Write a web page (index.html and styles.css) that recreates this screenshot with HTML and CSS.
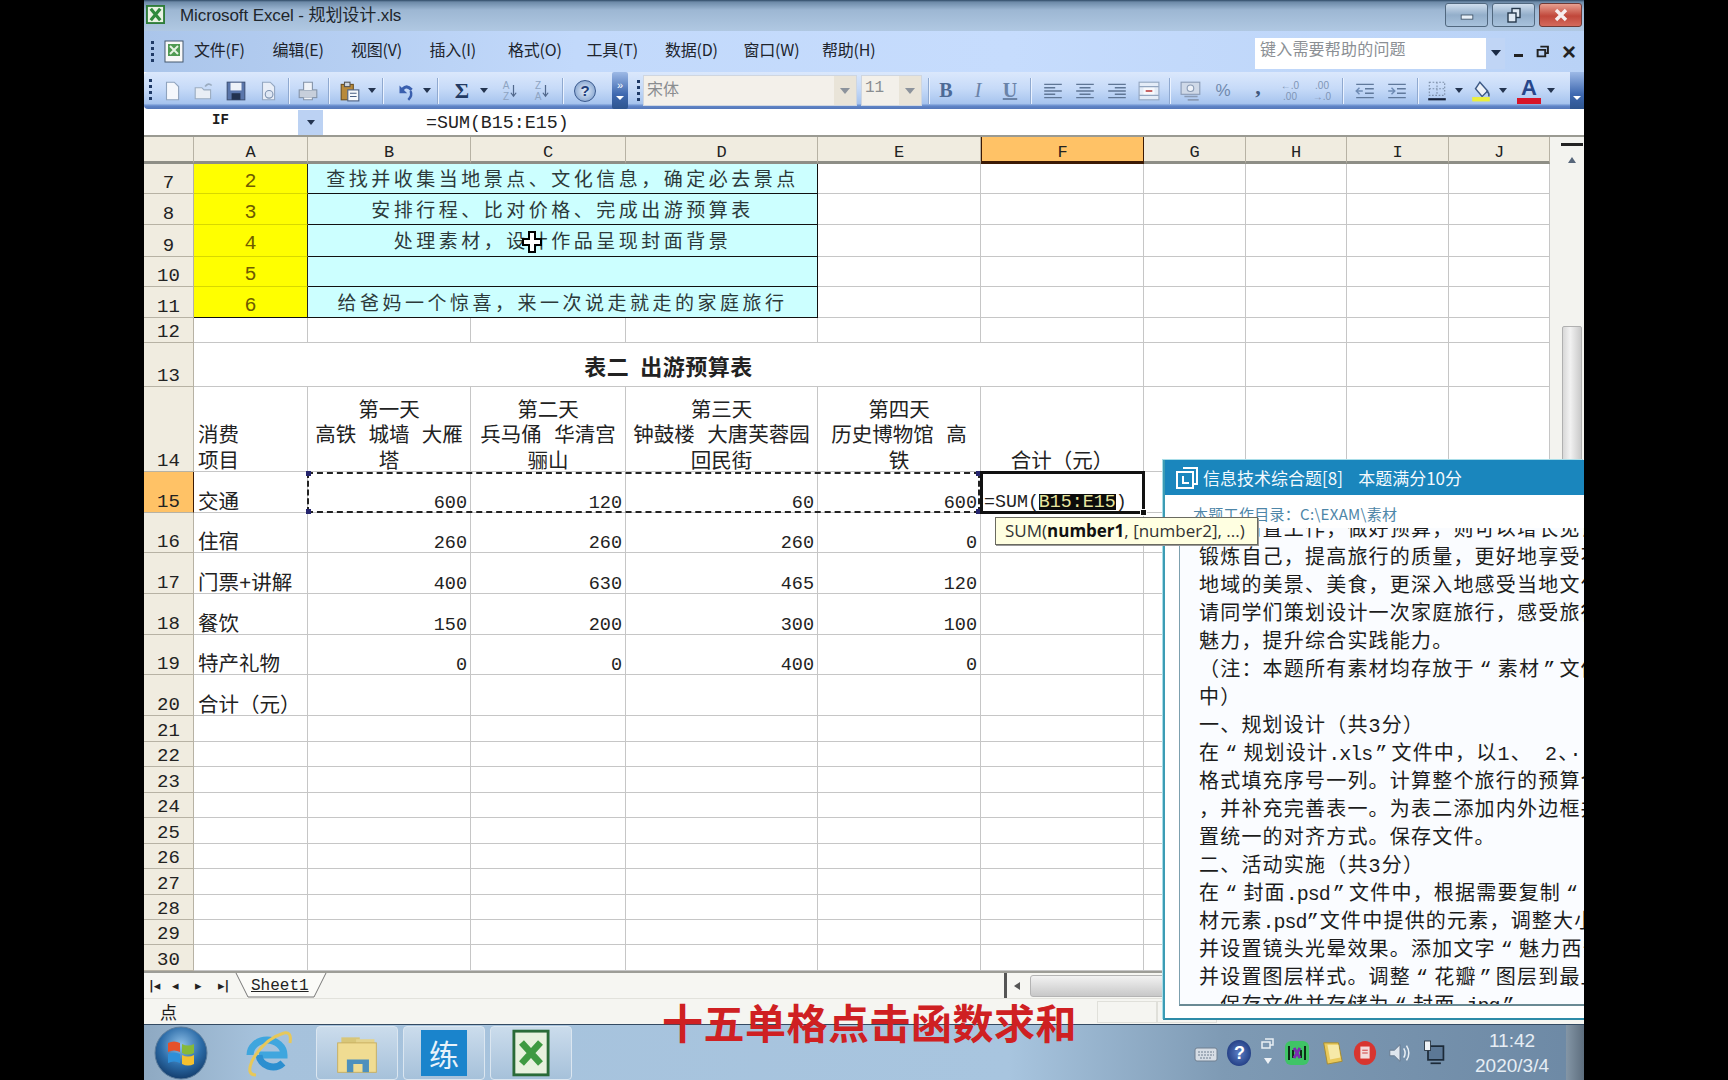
FILE: index.html
```html
<!DOCTYPE html>
<html lang="zh-CN">
<head>
<meta charset="utf-8">
<title>Microsoft Excel - 规划设计.xls</title>
<link rel="stylesheet" href="styles.css">
</head>
<body>
<div class="app">

  <header class="titlebar">
    <svg class="xl-small" viewBox="0 0 20 20"><rect x="1" y="1" width="18" height="18" fill="#eaf3e4" stroke="#2f7d3a" stroke-width="2"/><path d="M5 4l10 12M15 4L5 16" stroke="#2f8a3c" stroke-width="3.4"/></svg>
    <span class="title-text">Microsoft Excel - 规划设计.xls</span>
    <div class="winbtns">
      <button class="wb"><svg viewBox="0 0 20 12" width="18" height="10"><rect x="3" y="6" width="14" height="5" fill="#e8f0f8" stroke="#3d4f63"/></svg></button>
      <button class="wb"><svg viewBox="0 0 16 16" width="16" height="16"><rect x="6" y="1.5" width="8" height="9" fill="#dfe9f3" stroke="#26384b" stroke-width="1.4"/><rect x="2" y="6" width="8" height="9" fill="#dfe9f3" stroke="#26384b" stroke-width="1.4"/></svg></button>
      <button class="wb close"><svg viewBox="0 0 16 14" width="18" height="14"><path d="M3 2l10 10M13 2L3 12" stroke="#f6eeee" stroke-width="3.4"/></svg></button>
    </div>
  </header>

  <nav class="menubar">
    <i class="grip"></i>
    <svg class="menu-ico" viewBox="0 0 22 24"><rect x="2" y="1" width="18" height="21" fill="#f8f8f8" stroke="#44586f"/><rect x="5" y="4" width="12" height="12" fill="#4f9a52"/><path d="M7 6l8 8M15 6l-8 8" stroke="#e6f3e2" stroke-width="2"/></svg>
    <ul class="menus">
      <li>文件(F)</li><li>编辑(E)</li><li>视图(V)</li><li>插入(I)</li><li>格式(O)</li><li>工具(T)</li><li>数据(D)</li><li>窗口(W)</li><li>帮助(H)</li>
    </ul>
    <div class="helpbox"><span>键入需要帮助的问题</span><b class="helpdrop"><i class="tri"></i></b></div>
    <div class="mdi"><i class="mdi-min"></i><svg viewBox="0 0 12 12" width="13" height="13"><path d="M4 1.5h7v6H9M1.5 4.5h7v6h-7z" fill="none" stroke="#222" stroke-width="1.8"/></svg><span class="mdi-x">×</span></div>
  </nav>

  <div class="toolbar">
    <i class="grip tgrip"></i>
    <span class="t"><svg class="i" viewBox="0 0 20 20"><path d="M5 2h7l4 4v12H5z" fill="#f4f7fc" stroke="#8fa3bd"/></svg></span>
    <span class="t"><svg class="i" viewBox="0 0 20 20"><path d="M2 7h6l2 2h6v8H2z" fill="#e9eef5" stroke="#9bacc0"/><path d="M11 6q3-4 6-1" fill="none" stroke="#9bacc0" stroke-width="1.5"/></svg></span>
    <span class="t"><svg class="i" viewBox="0 0 20 20"><rect x="2" y="2" width="16" height="16" fill="#5a76ab" stroke="#3e5278"/><rect x="5" y="2.500" width="10" height="7" fill="#eef2f8"/><rect x="6" y="12" width="8" height="6" fill="#22324f"/></svg></span>
    <span class="t"><svg class="i" viewBox="0 0 20 20"><path d="M5 2h7l4 4v12H5z" fill="#e9eef7" stroke="#93a6c0"/><circle cx="11" cy="13" r="3.500" fill="#dfe8f5" stroke="#7f93b0"/></svg></span>
    <i class="s"></i>
    <span class="t"><svg class="i" viewBox="0 0 20 20"><rect x="2" y="9" width="16" height="7" fill="#c7cfdb" stroke="#8594a9"/><path d="M6 9V2h8v7M6 16v2h8v-2" fill="#f0f3f8" stroke="#8594a9"/></svg></span>
    <i class="s"></i>
    <span class="t nudge2"><svg class="i" viewBox="0 0 20 20"><rect x="2" y="4" width="11" height="14" fill="#b98a3b" stroke="#6d5122"/><rect x="5" y="2" width="5" height="4" fill="#cfd6df" stroke="#555"/><rect x="8" y="9" width="10" height="10" fill="#f7f9fc" stroke="#4a5f83"/><path d="M10 12h6M10 15h6" stroke="#4a5f83"/></svg></span>
    <i class="a"><i class="tri dark"></i></i>
    <i class="s"></i>
    <span class="t nudge3"><svg class="i" viewBox="0 0 20 20"><path d="M5 5v7h7l-3-3q3-3 6 1l2-2q-5-6-10-1z" fill="#3a5fae"/><path d="M15 10q2 4-2 8" fill="none" stroke="#3a5fae" stroke-width="2.2"/></svg></span>
    <i class="a"><i class="tri dark"></i></i>
    <i class="s"></i>
    <span class="t sigma">Σ</span>
    <i class="a"><i class="tri dark"></i></i>
    <span class="t sortlbl nudge5"><span class="az">A<br>Z</span><svg viewBox="0 0 8 20" width="7" height="20"><path d="M4 3v12M1 12l3 4 3-4" fill="none" stroke="#51688c" stroke-width="1.4"/></svg></span>
    <span class="t sortlbl"><span class="az">Z<br>A</span><svg viewBox="0 0 8 20" width="7" height="20"><path d="M4 3v12M1 12l3 4 3-4" fill="none" stroke="#51688c" stroke-width="1.4"/></svg></span>
    <i class="s"></i>
    <span class="t helpt"><span class="helpc">?</span></span>
    <span class="over"><i class="chev">»</i><i class="tri white"></i></span>
    <i class="grip tgrip2"></i>
    <span class="combo font"><span>宋体</span><b><i class="tri gray"></i></b></span>
    <span class="combo size"><span>11</span><b><i class="tri gray"></i></b></span>
    <i class="s first"></i>
    <span class="t fmt bold">B</span>
    <span class="t fmt ital">I</span>
    <span class="t fmt und">U</span>
    <i class="s"></i>
    <span class="t nudge3"><svg class="i" viewBox="0 0 20 20"><path d="M2 4h16M2 7h10M2 10h16M2 13h10M2 16h16" stroke="#5f7695" stroke-width="1.300"/></svg></span>
    <span class="t"><svg class="i" viewBox="0 0 20 20"><path d="M2 4h16M5 7h10M2 10h16M5 13h10M2 16h16" stroke="#5f7695" stroke-width="1.300"/></svg></span>
    <span class="t"><svg class="i" viewBox="0 0 20 20"><path d="M2 4h16M8 7h10M2 10h16M8 13h10M2 16h16" stroke="#5f7695" stroke-width="1.300"/></svg></span>
    <span class="t"><svg class="i" viewBox="0 0 20 20"><rect x="1" y="2" width="18" height="16" fill="#e4ecf7" stroke="#93a6c0"/><path d="M1 6h18M1 14h18" stroke="#93a6c0"/><rect x="5" y="7" width="10" height="6" fill="#f7f9fc"/><path d="M7 10h6" stroke="#b44" stroke-width="1.500"/></svg></span>
    <i class="s"></i>
    <span class="t nudge2"><svg class="i" viewBox="0 0 20 20"><rect x="1" y="2" width="17" height="11" fill="#cfd9e8" stroke="#8a9bb5"/><circle cx="9.500" cy="7.500" r="3" fill="#eef2f8" stroke="#8a9bb5"/><path d="M4 15h12M7 18h10" stroke="#8a9bb5" stroke-width="1.500"/></svg></span>
    <span class="t fmt pct">%</span>
    <span class="t fmt comma">,</span>
    <span class="t fmt dec"><span>←.0<br>.00</span></span>
    <span class="t fmt dec"><span>.00<br>→.0</span></span>
    <i class="s"></i>
    <span class="t nudge3"><svg class="i" viewBox="0 0 20 20"><path d="M2 4h16M10 8h8M10 12h8M2 16h16" stroke="#60799b" stroke-width="1.300"/><path d="M8 10H2m3-3l-3 3 3 3" fill="none" stroke="#6f8cb5" stroke-width="1.300"/></svg></span>
    <span class="t"><svg class="i" viewBox="0 0 20 20"><path d="M2 4h16M10 8h8M10 12h8M2 16h16" stroke="#60799b" stroke-width="1.300"/><path d="M2 10h6M5 7l3 3-3 3" fill="none" stroke="#6f8cb5" stroke-width="1.300"/></svg></span>
    <i class="s"></i>
    <span class="t"><svg class="i" viewBox="0 0 20 20"><path d="M3 2h14v12H3zM3 8h14M10 2v12" fill="none" stroke="#7c8ea8" stroke-dasharray="1.500 1.500"/><path d="M2 17.500h16" stroke="#16223a" stroke-width="2"/></svg></span>
    <i class="a"><i class="tri dark"></i></i>
    <span class="t"><svg class="i" viewBox="0 0 20 20"><path d="M9 2l7 8-5 5-6-7z" fill="#eef2f8" stroke="#3e5a86" stroke-width="1.300"/><path d="M15 10q3 2 2 5" fill="none" stroke="#3e5a86" stroke-width="1.500"/><rect x="2" y="15.500" width="16" height="4" fill="#ecef3c"/></svg></span>
    <i class="a"><i class="tri dark"></i></i>
    <span class="t fcolor nudge5"><span>A</span><i></i></span>
    <i class="a"><i class="tri dark"></i></i>
    <span class="over end"><i class="chev"></i><i class="tri white"></i></span>
  </div>

  <div class="formula">
    <div class="namebox"><span>IF</span><b><i class="tri dark"></i></b></div>
    <div class="ftext">=SUM(B15:E15)</div>
  </div>

  <div class="sheetwrap">
    <div class="sheet">
      <div class="ch corner"></div><div class="ch">A</div><div class="ch">B</div><div class="ch">C</div><div class="ch">D</div><div class="ch">E</div><div class="ch act-col">F</div><div class="ch">G</div><div class="ch">H</div><div class="ch">I</div><div class="ch">J</div>

      <div class="rh">7</div><div class="yl">2</div><div class="cy span3">查找并收集当地景点、文化信息，确定必去景点</div><div></div><div></div><div></div><div></div><div></div><div></div>
      <div class="rh">8</div><div class="yl">3</div><div class="cy span3">安排行程、比对价格、完成出游预算表</div><div></div><div></div><div></div><div></div><div></div><div></div>
      <div class="rh">9</div><div class="yl">4</div><div class="cy span3">处理素材，设计作品呈现封面背景</div><div></div><div></div><div></div><div></div><div></div><div></div>
      <div class="rh">10</div><div class="yl">5</div><div class="cy span3"></div><div></div><div></div><div></div><div></div><div></div><div></div>
      <div class="rh">11</div><div class="yl last">6</div><div class="cy span3 last">给爸妈一个惊喜，来一次说走就走的家庭旅行</div><div></div><div></div><div></div><div></div><div></div><div></div>
      <div class="rh">12</div><div></div><div></div><div></div><div></div><div></div><div></div><div></div><div></div><div></div><div></div>
      <div class="rh">13</div><div class="sheet-title">表二&nbsp;&nbsp;出游预算表</div><div></div><div></div><div></div><div></div>
      <div class="rh">14</div><div class="hd left"><span>消费<br>项目</span></div><div class="hd"><span>第一天<br>高铁 城墙 大雁<br>塔</span></div><div class="hd"><span>第二天<br>兵马俑 华清宫<br>骊山</span></div><div class="hd"><span>第三天<br>钟鼓楼 大唐芙蓉园<br>回民街</span></div><div class="hd"><span>第四天<br>历史博物馆 高<br>铁</span></div><div class="hd"><span>合计（元）</span></div><div></div><div></div><div></div><div></div>
      <div class="rh act-row">15</div><div class="tx">交通</div><div class="num ants-host">600<span class="ants"><i class="dot tl"></i><i class="dot tr"></i><i class="dot bl"></i><i class="dot br"></i></span></div><div class="num">120</div><div class="num">60</div><div class="num">600</div><div class="active"><span>=SUM(</span><mark>B15:E15</mark><span>)</span><i class="handle"></i></div><div></div><div></div><div></div><div></div>
      <div class="rh">16</div><div class="tx">住宿</div><div class="num">260</div><div class="num">260</div><div class="num">260</div><div class="num">0</div><div></div><div></div><div></div><div></div><div></div>
      <div class="rh">17</div><div class="tx">门票+讲解</div><div class="num">400</div><div class="num">630</div><div class="num">465</div><div class="num">120</div><div></div><div></div><div></div><div></div><div></div>
      <div class="rh">18</div><div class="tx">餐饮</div><div class="num">150</div><div class="num">200</div><div class="num">300</div><div class="num">100</div><div></div><div></div><div></div><div></div><div></div>
      <div class="rh">19</div><div class="tx">特产礼物</div><div class="num">0</div><div class="num">0</div><div class="num">400</div><div class="num">0</div><div></div><div></div><div></div><div></div><div></div>
      <div class="rh">20</div><div class="tx">合计（元）</div><div></div><div></div><div></div><div></div><div></div><div></div><div></div><div></div><div></div>
      <div class="rh">21</div><div></div><div></div><div></div><div></div><div></div><div></div><div></div><div></div><div></div><div></div>
      <div class="rh">22</div><div></div><div></div><div></div><div></div><div></div><div></div><div></div><div></div><div></div><div></div>
      <div class="rh">23</div><div></div><div></div><div></div><div></div><div></div><div></div><div></div><div></div><div></div><div></div>
      <div class="rh">24</div><div></div><div></div><div></div><div></div><div></div><div></div><div></div><div></div><div></div><div></div>
      <div class="rh">25</div><div></div><div></div><div></div><div></div><div></div><div></div><div></div><div></div><div></div><div></div>
      <div class="rh">26</div><div></div><div></div><div></div><div></div><div></div><div></div><div></div><div></div><div></div><div></div>
      <div class="rh">27</div><div></div><div></div><div></div><div></div><div></div><div></div><div></div><div></div><div></div><div></div>
      <div class="rh">28</div><div></div><div></div><div></div><div></div><div></div><div></div><div></div><div></div><div></div><div></div>
      <div class="rh">29</div><div></div><div></div><div></div><div></div><div></div><div></div><div></div><div></div><div></div><div></div>
      <div class="rh">30</div><div></div><div></div><div></div><div></div><div></div><div></div><div></div><div></div><div></div><div></div>
    </div>
    <div class="vscroll">
      <i class="split"></i>
      <i class="tri up"></i>
      <i class="thumb"></i>
    </div>
  </div>

  <div class="tabbar">
    <span class="navs"><i>|◂</i><i>◂</i><i>▸</i><i>▸|</i></span>
    <svg class="tab" viewBox="0 0 92 26" width="92" height="26"><path d="M1 0l12 24h66L91 0" fill="#fbfbf8" stroke="#777"/></svg>
    <span class="tabname">Sheet1</span>
    <i class="splitter"></i>
    <i class="tri left"></i>
    <i class="hthumb"></i>
  </div>

  <div class="statusbar"><span>点</span><i class="sbox"></i><i class="sbox"></i></div>

  <footer class="taskbar">
    <svg class="orb" viewBox="0 0 56 56" width="56" height="56">
      <defs><radialGradient id="og" cx="50%" cy="35%" r="65%"><stop offset="0" stop-color="#8fc0e8"/><stop offset=".6" stop-color="#2c6ca8"/><stop offset="1" stop-color="#143e6e"/></radialGradient></defs>
      <circle cx="28" cy="28" r="26" fill="url(#og)" stroke="#5b7c9c"/>
      <path d="M15 18q6-3 12 0v9q-6-3-12 0z" fill="#e5512a"/><path d="M29 19q6 3 12 0v9q-6 3-12 0z" fill="#86b93a"/><path d="M15 29q6-3 12 0v9q-6-3-12 0z" fill="#2e8fd8"/><path d="M29 30q6 3 12 0v9q-6 3-12 0z" fill="#f4c02f"/>
    </svg>
    <svg class="ie" viewBox="0 0 52 56" width="52" height="56">
      <path d="M8 30a17 15 0 1 1 34 0H17" fill="none" stroke="#3fa6de" stroke-width="7"/><path d="M17 30a14 13 0 0 0 24 8" fill="none" stroke="#2c8fd0" stroke-width="7"/><path d="M42 8Q22 14 10 36q-6 14 4 14" fill="none" stroke="#e7c85a" stroke-width="3"/><path d="M42 8q8-2 6 10" fill="none" stroke="#e7c85a" stroke-width="3"/>
    </svg>
    <div class="tbtn"><svg viewBox="0 0 50 50" width="46" height="48"><rect x="8" y="8" width="20" height="8" fill="#d8c678"/><rect x="24" y="10" width="20" height="8" fill="#e4d38c"/><rect x="4" y="14" width="42" height="32" fill="#f0dc92" stroke="#c6ad5f"/><path d="M14 46V32h24v14h-7V37H21v9z" fill="#4d90bd"/></svg></div>
    <div class="tbtn"><span class="lian">练</span></div>
    <div class="tbtn"><svg viewBox="0 0 40 50" width="38" height="48"><rect x="2" y="2" width="36" height="46" fill="#e8f1de" stroke="#2a6b37" stroke-width="3"/><path d="M10 14l20 22M30 14L10 36" stroke="#3f9a42" stroke-width="7"/></svg></div>
    <div class="tray">
      <svg viewBox="0 0 24 20" width="24" height="20"><rect x="1" y="5" width="22" height="13" rx="2" fill="#d6dde5" stroke="#6f7f90"/><path d="M4 9h16M4 12h16M6 15h12" stroke="#6f7f90" stroke-dasharray="2 1"/></svg>
      <span class="qmark">?</span>
      <svg class="uparrow" viewBox="0 0 14 30" width="14" height="30"><path d="M4 1h8v6H9M1 4h8v6H1z" fill="none" stroke="#e8eef4" stroke-width="1.500"/><path d="M3 20h8l-4 6z" fill="#eef2f6"/></svg>
      <svg viewBox="0 0 26 26" width="26" height="26"><rect x="1" y="1" width="24" height="24" rx="6" fill="#3fc466"/><path d="M5 6v14M21 6v14M9 10v8M17 10v8" stroke="#0e2a16" stroke-width="2"/><path d="M10 8l6 10M16 8l-6 10" stroke="#7a2bb0" stroke-width="3"/></svg>
      <svg viewBox="0 0 26 28" width="24" height="28"><path d="M4 3h16l4 20-16 3z" fill="#e9c95b" stroke="#a58a2e"/><path d="M8 5h12l2 14-11 2z" fill="#f6e9a8"/></svg>
      <svg viewBox="0 0 26 28" width="24" height="28"><ellipse cx="13" cy="14" rx="12" ry="13" fill="#d8352f"/><rect x="8" y="7" width="10" height="13" fill="#f2dcdc"/><path d="M10 11h6M10 14h6" stroke="#c33"/></svg>
      <svg viewBox="0 0 28 24" width="26" height="24"><path d="M3 9h5l6-6v18l-6-6H3z" fill="#dfe6ee" stroke="#66788c"/><path d="M18 7q3 5 0 10M21 4q5 8 0 16" fill="none" stroke="#e9eff5" stroke-width="1.600"/></svg>
      <svg viewBox="0 0 28 32" width="24" height="30"><rect x="7" y="8" width="18" height="16" fill="#5c7896" stroke="#1c2a38" stroke-width="2"/><rect x="3" y="2" width="7" height="11" fill="#eef2f6" stroke="#23303d"/><path d="M10 28h12" stroke="#1c2a38" stroke-width="2"/></svg>
    </div>
    <div class="clock"><span>11:42</span><span>2020/3/4</span></div>
    <div class="showdesk"></div>
  </footer>

  <section class="panel">
    <div class="panel-head">
      <svg viewBox="0 0 24 24" width="24" height="24"><path d="M8 2h14v16H8" fill="none" stroke="#fff" stroke-width="2"/><rect x="2" y="6" width="16" height="16" fill="#1b87bd" stroke="#fff" stroke-width="2"/><path d="M8 10v7h6" fill="none" stroke="#fff" stroke-width="2"/></svg>
      <span>信息技术综合题[8]&nbsp;&nbsp;&nbsp;&nbsp;本题满分10分</span>
    </div>
    <div class="panel-dir">本题工作目录：C:\EXAM\素材</div>
    <div class="panel-body">
      <p>旅行前置工作，做好预算，则可以增长见识，</p>
      <p>锻炼自己，提高旅行的质量，更好地享受不同</p>
      <p>地域的美景、美食，更深入地感受当地文化，</p>
      <p>请同学们策划设计一次家庭旅行，感受旅行的</p>
      <p>魅力，提升综合实践能力。</p>
      <p>（注：本题所有素材均存放于<span class="q">“</span>素材<span class="qc">”</span>文件夹</p>
      <p>中）</p>
      <p>一、规划设计（共3分）</p>
      <p>在<span class="q">“</span>规划设计<span class="lat">.xls</span><span class="qc">”</span>文件中，以1、 2、···序列</p>
      <p>格式填充序号一列。计算整个旅行的预算合计</p>
      <p>，并补充完善表一。为表二添加内外边框并设</p>
      <p>置统一的对齐方式。保存文件。</p>
      <p>二、活动实施（共3分）</p>
      <p>在<span class="q">“</span>封面<span class="lat">.psd</span><span class="qc">”</span>文件中，根据需要复制<span class="q">“</span>素</p>
      <p>材元素<span class="lat">.psd</span>”文件中提供的元素，调整大小，</p>
      <p>并设置镜头光晕效果。添加文字<span class="q">“</span>魅力西安<span class="qc">”</span></p>
      <p>并设置图层样式。调整<span class="q">“</span>花瓣<span class="qc">”</span>图层到最上层</p>
      <p>，保存文件并存储为<span class="q">“</span>封面<span class="lat">.jpg</span><span class="qc">”</span></p>
    </div>
  </section>

  <div class="tooltip">SUM(<b>number1</b>, [number2], ...)</div>
  <svg class="cursor" viewBox="0 0 20 22" width="20" height="22"><path d="M7 1h6v7h6v6h-6v7H7v-7H1V8h6z" fill="#fff" stroke="#000" stroke-width="2"/></svg>
  <div class="subtitle">十五单格点击函数求和</div>
</div>
</body>
</html>
```

FILE: styles.css
```css
* { box-sizing: border-box; }
html, body { margin: 0; padding: 0; background: #000; width: 1728px; height: 1080px; overflow: hidden; }
i { font-style: normal; display: block; }
ul { list-style: none; margin: 0; padding: 0; }
p { margin: 0; }
button { border: 0; padding: 0; }

.app {
  position: relative;
  width: 1440px;
  height: 1080px;
  margin-left: 144px;
  overflow: hidden;
  display: flex;
  flex-direction: column;
  background: #fff;
  font-family: "Noto Sans CJK SC", sans-serif;
  color: #1c1c1c;
}

/* title bar */
.titlebar {
  height: 31px;
  flex: none;
  display: flex;
  align-items: center;
  padding-left: 2px;
  background: linear-gradient(#2f4a66 0, #6d8aa8 2px, #9db7d3 10px, #b0c8e2 31px);
}
.xl-small { width: 19px; height: 19px; margin-top: -2px; }
.title-text { margin: -5px 0 0 15px; font-size: 17px; color: #20262c; font-family: "Liberation Sans", "Noto Sans CJK SC", sans-serif; letter-spacing: -.1px; }
.winbtns { margin-left: auto; display: flex; gap: 4px; height: 24px; margin-right: 2px; margin-top: -2px; }
.wb { width: 43px; height: 24px; border-radius: 3px; display: flex; align-items: center; justify-content: center; border: 1px solid #51687f; background: linear-gradient(#cfdeee, #93aeca 50%, #a8c2dc); }
.wb.close { background: linear-gradient(#e8a090, #c0473a 55%, #d46a5c); border-color: #6e3a36; }

/* menu */
.menubar {
  height: 41px;
  flex: none;
  display: flex;
  align-items: center;
  background: linear-gradient(90deg, #aac5ea 0, #c2d9fb 30%, #c6dcfd 60%, #b9d2f6 100%);
}
.grip { width: 3px; height: 22px; background: repeating-linear-gradient(#1f3a66 0 3px, transparent 3px 6px); }
.menubar .grip { margin-left: 7px; }
.menu-ico { width: 22px; height: 24px; margin-left: 9px; }
.menus { display: flex; margin: -5px 0 0 9px; gap: 22.500px; font-size: 16px; color: #20242c; }
.menus li { width: 56px; white-space: nowrap; letter-spacing: -.2px; }
.helpbox { margin-left: auto; width: 250px; height: 31px; background: #fff; display: flex; align-items: center; justify-content: space-between; font-size: 16px; color: #8b8f94; padding-left: 5px; margin-top: 3px; letter-spacing: .2px; }
.helpbox span { margin-top: -11px; }
.helpdrop { width: 19px; height: 31px; background: #c0d5f5; display: flex; align-items: center; justify-content: center; }
.mdi { width: 79px; display: flex; align-items: center; justify-content: space-between; padding: 0 8px 0 9px; color: #222; }
.mdi-min { width: 9px; height: 3px; background: #222; margin-top: 8px; }
.mdi-x { font-family: "Liberation Sans", sans-serif; font-size: 24px; font-weight: 700; line-height: 1; }

.tri { width: 0; height: 0; border-style: solid; border-width: 6px 5px 0; border-color: #1a2a44 transparent transparent; }
.tri.dark { border-width: 5px 4px 0; border-top-color: #243450; }
.tri.gray { border-top-color: #8c939c; }
.tri.white { border-width: 4px 4px 0; border-top-color: #fff; }

/* toolbar */
.toolbar {
  height: 37px;
  flex: none;
  display: flex;
  align-items: center;
  padding-left: 5px;
  background: linear-gradient(#dbe8fc 0, #c6daf8 45%, #a7c4ee 85%, #5f85c8 92%, #5577b8 100%);
  border-radius: 4px 0 0 4px;
}
.tgrip { height: 24px; flex: none; }
.t { width: 32px; height: 30px; display: flex; align-items: center; justify-content: center; flex: none; }
.tgrip + .t { margin-left: 4px; }
.nudge2 { margin-left: 2px; }
.nudge3 { margin-left: 3px; }
.nudge5 { margin-left: 4px; }
.i { width: 22px; height: 22px; }
.s { width: 1px; height: 26px; background: #8fa9d0; margin: 0 3px 0 4px; flex: none; box-shadow: 1px 0 0 #eaf2ff; }
.a { width: 12px; display: flex; justify-content: center; flex: none; }
.sigma { font-family: "Liberation Serif", serif; font-weight: 700; font-size: 22px; color: #233a62; margin-left: 5px; }
.sortlbl { gap: 1px; }
.az { font-family: "Liberation Sans", sans-serif; font-size: 10px; line-height: 11px; color: #8ea4c2; text-align: center; }
.helpt { margin-left: 3px; }
.helpc { width: 22px; height: 22px; border-radius: 50%; background: radial-gradient(#e7f0fb, #6f93c6); border: 1px solid #3b5a8e; display: flex; align-items: center; justify-content: center; font: 700 15px "Liberation Sans", sans-serif; color: #1f3d78; }
.over { width: 16px; height: 37px; margin-left: 11px; background: linear-gradient(#9db9e6, #3f69b0 60%, #2e558f); display: flex; flex-direction: column; align-items: center; justify-content: center; gap: 7px; flex: none; border-radius: 2px; }
.over.end { width: 14px; margin-left: auto; border-radius: 0; }
.chev { color: #fff; font-size: 11px; line-height: 8px; height: 8px; font-family: "Liberation Sans", sans-serif; }
.tgrip2 { margin-left: 9px; }
.combo { height: 31px; display: flex; align-items: center; justify-content: space-between; background: #f3f0ea; border: 1px solid #cfd6e0; font-size: 16px; color: #8a8d90; padding-left: 3px; flex: none; }
.combo span { margin-top: -6px; }
.combo b { width: 22px; height: 100%; background: #e9e4d8; display: flex; align-items: center; justify-content: center; }
.combo.font { width: 214px; margin-left: 3px; }
.combo.size { width: 61px; margin-left: 4px; font-family: "Liberation Mono", monospace; }
.s.first { margin-left: 6px; margin-right: 1px; }
.fmt { color: #6a83a8; font-family: "Liberation Serif", serif; font-size: 20px; }
.bold { font-weight: 700; color: #4d6a96; }
.ital { font-style: italic; }
.und { text-decoration: underline; font-weight: 700; }
.pct { font-family: "Liberation Sans", sans-serif; font-size: 17px; color: #7089ad; }
.comma { font-weight: 700; font-size: 22px; color: #40587e; padding-bottom: 8px; margin-left: 3px; }
.dec { font: 10px/11px "Liberation Sans", sans-serif; color: #7f95b5; text-align: center; }
.fcolor { flex-direction: column; gap: 0; font: 700 22px/20px "Liberation Sans", sans-serif; color: #27478a; }
.fcolor i { width: 24px; height: 6px; background: #d81528; }

/* formula bar */
.formula {
  height: 27px;
  flex: none;
  margin-top: 1px;
  display: flex;
  background: #fff;
  border-bottom: 2px solid #9a9a92;
  font-family: "Liberation Mono", monospace;
}
.namebox { width: 179px; position: relative; display: flex; justify-content: flex-end; font-size: 14px; }
.namebox span { position: absolute; left: 68px; top: 0; font-weight: 700; line-height: 20px; }
.namebox b { width: 25px; background: #bcd2f3; display: flex; align-items: center; justify-content: center; }
.ftext { margin-left: 103px; font-size: 18.300px; line-height: 26px; color: #222; }

/* sheet */
.sheetwrap { display: flex; height: 834px; flex: none; }
.sheet {
  display: grid;
  grid-template-columns: 50px 114px 163px 155px 192px 163px 163px 102px 101px 102px 101px;
  grid-template-rows: 27px 30px 31px 32px 30px 31px 25px 44px 85px 41px 40px 41px 41px 40px 41px 26px 25px 26px 25px 26px 25px 26px 25px 25px 26px;
  width: 1406px;
  font-family: "Liberation Mono", "Noto Sans CJK SC", monospace;
  font-size: 19px;
  color: #222;
}
.sheet > div {
  border-right: 1px solid #c6c6c6;
  border-bottom: 1px solid #c6c6c6;
  display: flex;
  align-items: flex-end;
  line-height: 24px;
  white-space: nowrap;
  min-width: 0;
}
.sheet > .ch { background: #f0ece0; justify-content: center; align-items: center; padding-top: 8px; font-size: 17px; border-right-color: #b7b2a4; border-bottom: 3px solid #8e8e86; }
.sheet > .corner { background: #f0ece0; }
.sheet > .act-col { background: #ffc266; border-bottom: 3px solid #3c1a04; border-right: 1px solid #3c1a04; border-left: 1px solid #3c1a04; }
.sheet > .rh { background: #f0ece0; justify-content: center; border-right: 1px solid #b7b2a4; border-bottom-color: #b7b2a4; font-size: 19px; line-height: 19px; }
.sheet > .act-row { background: #ffc266; border-right: 1px solid #3c1a04; }
.sheet > .yl { background: #ff0; justify-content: center; color: #6e5c00; font-size: 20px; padding-top: 7px; border-right: 1px solid #222; border-bottom-color: #d8d800; align-items: center; }
.sheet > .yl.last { border-bottom-color: #111; }
.sheet > .cy { grid-column: span 3; background: #ccffff; border-right: 1px solid #111; border-bottom: 1px solid #111; justify-content: center; align-items: center; padding-top: 5px; font-size: 19px; letter-spacing: 3.500px; color: #2c3a3a; }
.sheet > .sheet-title { grid-column: span 6; justify-content: center; align-items: center; font-family: "Noto Sans CJK SC", sans-serif; font-weight: 700; font-size: 22px; letter-spacing: .5px; }
.sheet > .hd { justify-content: center; text-align: center; font-size: 20.500px; line-height: 25.500px; }
.hd span { margin-bottom: -4px; }
.sheet > .left { justify-content: flex-start; text-align: left; padding-left: 4px; }
.sheet > .tx { padding: 0 0 0 4px; font-size: 20.500px; line-height: 16px; }
.sheet > .num { justify-content: flex-end; padding: 0 3px 0 0; font-size: 18.500px; line-height: 16px; }
.ants-host { position: relative; }
.ants { position: absolute; left: -1px; top: 0; width: 673px; height: 41px; border: 2px dashed #222; }
.dot { position: absolute; width: 5px; height: 5px; background: #25256e; }
.tl { left: -3px; top: -3px; }
.tr { right: -3px; top: -3px; }
.bl { left: -3px; bottom: -3px; }
.br { right: -3px; bottom: -3px; }
.sheet > .active { position: relative; outline: 3px solid #111; outline-offset: -2px; padding: 0 0 2px 3px; font-size: 18.300px; line-height: 16px; color: #222; z-index: 1; }
mark { background: #0c0c0c; color: #e8e6a0; }
.handle { position: absolute; right: -4px; bottom: -4px; width: 7px; height: 7px; background: #111; border: 1px solid #fff; }

.vscroll { flex: 1; position: relative; background: #f3f3ef; display: flex; flex-direction: column; align-items: center; padding-left: 10px; }
.split { width: 22px; height: 3px; background: #222; margin-top: 6px; }
.tri.up { border-width: 0 4px 6px; border-color: transparent transparent #57667a; margin-top: 11px; }
.thumb { width: 20px; height: 150px; margin-top: 163px; background: linear-gradient(90deg, #d8d8d8, #f2f2f2 40%, #c9c9c9); border: 1px solid #b0b0b0; border-radius: 2px; }

/* tabs */
.tabbar { height: 27px; flex: none; display: flex; align-items: center; background: #f6f6f2; border-top: 2px solid #9d9d97; position: relative; }
.navs { display: flex; width: 88px; padding-left: 5px; gap: 9px; font-size: 13px; font-weight: 700; font-family: "DejaVu Sans", sans-serif; color: #222; }
.navs i { width: 14px; }
.tab { margin-left: 3px; flex: none; }
.tabname { margin-left: -76px; width: 76px; font: 16px "Liberation Mono", monospace; color: #222; text-decoration: underline; }
.splitter { width: 3px; height: 26px; background: #555; margin-left: 677px; flex: none; }
.tri.left { border-width: 4px 6px 4px 0; border-color: transparent #555 transparent transparent; margin-left: 7px; }
.hthumb { width: 200px; height: 22px; margin-left: 10px; border: 1px solid #b4b4b4; border-radius: 3px; background: linear-gradient(#f2f2f2, #c8c8c8); }

.statusbar { height: 26px; flex: none; display: flex; align-items: center; background: #f5f5f1; padding-left: 16px; font-size: 17px; border-top: 1px solid #e2e2dc; position: relative; }
.sbox { width: 60px; height: 22px; border: 1px solid #e0e0da; }
.statusbar span + .sbox { margin-left: 920px; }

/* taskbar */
.taskbar { height: 56px; flex: none; display: flex; align-items: center; border-top: 1px solid #334a62; background: linear-gradient(90deg, #8ea9c2 0, #a6c2dc 8%, #a8c5df 60%, #7e9ab4 75%, #6d89a5 100%); }
.orb { margin-left: 9px; flex: none; }
.ie { margin-left: 33px; flex: none; }
.tbtn { width: 82px; height: 54px; margin-left: 5px; border: 1px solid #dbe6f0; border-radius: 4px; background: linear-gradient(#cbdcec, #a6c1da); display: flex; align-items: center; justify-content: center; flex: none; }
.ie + .tbtn { margin-left: 22px; }
.lian { width: 46px; height: 46px; background: #1a84cc; color: #e8f2fa; display: flex; align-items: center; justify-content: center; font-size: 30px; }
.tray { margin-left: 622px; display: flex; align-items: center; flex: none; width: 252px; justify-content: space-between; }
.qmark { width: 24px; height: 26px; border-radius: 50%; background: radial-gradient(#5b7fc6, #10286e); color: #fff; font: 700 18px/26px "Liberation Sans", sans-serif; text-align: center; }
.clock { width: 108px; margin-left: 12px; display: flex; flex-direction: column; align-items: center; color: #e6edf4; font: 19px/25px "Liberation Sans", sans-serif; flex: none; }
.showdesk { flex: 1; height: 100%; background: linear-gradient(90deg, #8496a6, #5d6e7e); }

/* overlays */
.panel { position: absolute; left: 1019px; top: 460px; width: 421px; height: 560px; display: flex; flex-direction: column; background: #fff; border-left: 2px solid #3c9cb4; border-bottom: 2px solid #2e8ca8; z-index: 3; box-shadow: -1px -1px 0 #a8dde8; }
.panel-head { height: 35px; flex: none; background: #1a86bd; color: #f4fafd; display: flex; align-items: center; padding-left: 10px; gap: 4px; font-size: 17px; white-space: nowrap; }
.panel-dir { height: 33px; flex: none; padding: 5px 0 0 28px; font-size: 15px; line-height: 28px; color: #4e86a8; white-space: nowrap; letter-spacing: .3px; }
.panel-body { height: 478px; flex: none; margin-left: 14px; overflow: hidden; padding: 0 0 0 19px; border-left: 1px solid #7da0ae; border-bottom: 2px solid #6a8a94; background: #fafcff; font-family: "Liberation Mono", "Noto Sans CJK SC", monospace; font-size: 20px; letter-spacing: 1.200px; line-height: 28px; color: #1c1c1c; }
.panel-body p { white-space: nowrap; height: 28px; }
.panel-body p:first-child { margin-top: -11px; }
.q { padding: 0 5px; }
.qc { padding: 0 3px; }
.lat { letter-spacing: -1px; }

.tooltip { position: absolute; left: 851px; top: 517px; width: 263px; height: 28px; background: #ffffe1; border: 1px solid #6a6a60; box-shadow: 1px 1px 0 #999; z-index: 4; font: 17px/26px "Open Sans", "Liberation Sans", sans-serif; padding-left: 9px; color: #333; white-space: nowrap; }
.tooltip b { color: #111; }
.cursor { position: absolute; left: 378px; top: 231px; z-index: 4; }
.subtitle { position: absolute; left: 518px; top: 993px; z-index: 5; font-weight: 700; font-size: 41px; line-height: 56px; color: #cf2022; white-space: nowrap; letter-spacing: .5px; }
```
